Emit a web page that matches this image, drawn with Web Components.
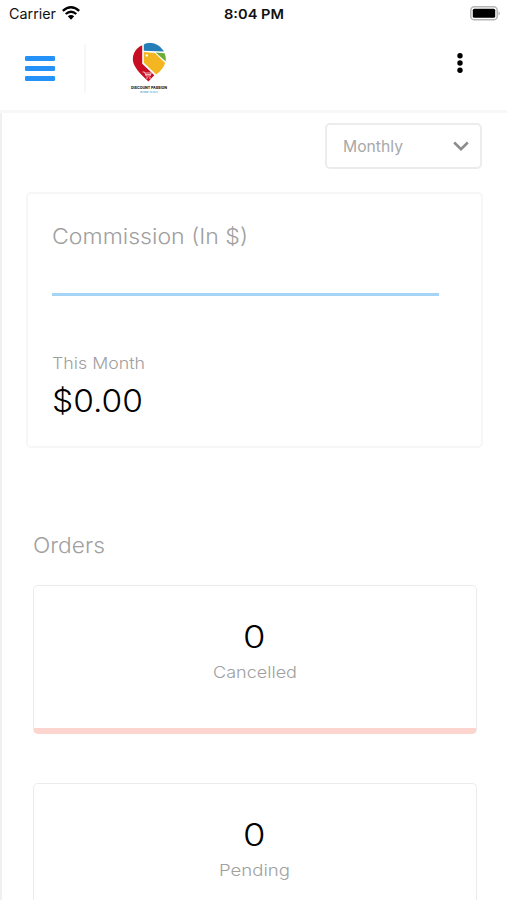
<!DOCTYPE html>
<html lang="en"><head><meta charset="utf-8"><title>Dashboard</title>
<style>
html,body{margin:0;background:#fff}
body{width:507px;height:900px;overflow:hidden;font-family:Inter,"Open Sans",sans-serif}
</style></head><body>
<mobile-screen>
<status-bar slot="status"></status-bar>
<app-header slot="header"></app-header>
<period-select>Monthly</period-select>
<commission-card></commission-card>
<order-list></order-list>
</mobile-screen>
<script>
function define(name, html, init){
  customElements.define(name, class extends HTMLElement{
    constructor(){super();this.attachShadow({mode:'open'}).innerHTML=html}
    connectedCallback(){if(init)init.call(this)}
  });
}
define('wide-text',`<style>:host{display:block;white-space:nowrap}span{display:inline-block;transform-origin:0 50%}</style><span><slot></slot></span>`,function(){
  const w=+this.getAttribute('measure'),s=this.shadowRoot.querySelector('span');
  this.style.width=w+'px';
  s.style.transform='scaleX('+w/s.getBoundingClientRect().width+')';
});
define('mobile-screen',`<style>:host{display:flex;flex-direction:column;height:900px;overflow:hidden;background:#fff}
main{flex:1;box-sizing:border-box;border-left:2px solid #f0f0f0;display:flex;flex-direction:column;min-height:0;overflow:hidden}</style>
<slot name="status"></slot><slot name="header"></slot><main><slot></slot></main>`);
define('status-bar',`<style>:host{display:grid;grid-template-columns:1fr 60px 1fr;height:27px;align-items:center;box-sizing:border-box;padding:0 6px 0 9px;color:#111;font-size:14px;line-height:18px}
.l{display:flex;gap:6px;align-items:center}.c{font-weight:600;font-size:13.5px;margin-left:-1px}.r{display:flex;justify-content:flex-end}svg{display:block}.l svg{margin-top:-2px}</style>
<div class="l"><wide-text measure="47">Carrier</wide-text><svg width="18" height="14" viewBox="0 0 18 14"><g fill="none" stroke="#000" stroke-width="2.3"><path d="M.8 4.8Q9-2.2 17.2 4.8"/><path d="M3.7 8Q9 3.4 14.3 8"/></g><path fill="#000" d="M5.8 10.2Q9 7.7 12.2 10.2L9 13.7Z"/></svg></div>
<div class="c"><wide-text measure="60">8:04 PM</wide-text></div>
<div class="r"><svg width="31" height="15" viewBox="0 0 31 15"><rect x=".8" y=".8" width="26.4" height="13" rx="3.6" fill="#fff" stroke="#b5b5b5" stroke-width="1.5"/><rect x="2.8" y="2.8" width="22.4" height="9" rx="1.5" fill="#000"/><path d="M28.6 5.2Q31 7.3 28.6 9.4Z" fill="#aaa"/></svg></div>`);
define('app-header',`<style>:host{display:flex;align-items:center;height:86px;flex:none;box-sizing:border-box;border-bottom:3px solid #f7f7f7;padding:0 44px 0 25px}
.menu{display:grid;gap:5px;width:30px}.menu i{height:5px;border-radius:1.3px;background:#2492f8}
.rule{width:2px;height:49px;background:#f7f7f7;margin-left:29px}.dots{margin-left:auto;display:block;margin-top:-11px}
brand-logo{margin-left:44px}</style>
<div class="menu"><i></i><i></i><i></i></div><div class="rule"></div><brand-logo></brand-logo><svg class="dots" width="6" height="22" viewBox="0 0 6 22"><circle cx="3" cy="3.7" r="2.7"/><circle cx="3" cy="11" r="2.7"/><circle cx="3" cy="18.3" r="2.7"/></svg>`);
define('brand-logo',`<style>:host{display:block}svg{display:block;overflow:visible}</style>
<svg width="40" height="56" viewBox="0 0 40 56">
<path fill="#c90d22" d="M12.2 4.3C5.1 7.3 1.3 14.7 3.5 22.3C5.7 28.2 12 35 18.5 40.5L24.3 34.2L12.2 22.8Z"/>
<path fill="#247fb9" d="M13.8 3.4C19 .9 27.5 1.8 32 8Q33.6 9.6 34 10.6L13.8 9.7Z"/>
<path fill="#6cac35" d="M25.6 11.4L34.6 12.2Q36.4 16.5 35.8 20.5Z"/>
<path fill="#f4b620" d="M13.8 11L24.8 12L35.2 22Q33.2 28.3 26.2 33.5L13.8 21.8Z"/>
<circle cx="16.8" cy="14.4" r="1.2" fill="#fff"/>
<g fill="none" stroke="#fff" stroke-width=".7"><path d="M12.5 31h2l1.6 4h4l1.1-3h-6M15.6 33.5h4.8"/></g><circle cx="17" cy="37" r=".7" fill="#fff"/><circle cx="20" cy="37" r=".7" fill="#fff"/>
<text x="1" y="48" textLength="36" lengthAdjust="spacingAndGlyphs" font-family="Inter" font-weight="800" font-size="4" fill="#222">DISCOUNT PASSION</text>
<text x="10" y="52.2" textLength="18" lengthAdjust="spacingAndGlyphs" font-family="Inter" font-weight="600" font-size="2.6" fill="#55a9ce">WHERE TO BUY</text></svg>`);
define('period-select',`<style>:host{display:flex;align-self:flex-end;align-items:center;justify-content:space-between;box-sizing:border-box;width:157px;height:46px;flex:none;margin:10px 25px 0 0;padding:0 11px 0 16px;border:2px solid #ececec;border-radius:5px;color:#a8a8a8;font-size:15.5px}</style>
<wide-text measure="60"><slot></slot></wide-text><svg width="16" height="10" viewBox="0 0 16 10"><path d="M1.2 1.5L8 8.2L14.8 1.5" fill="none" stroke="#8b8b8b" stroke-width="2.5"/></svg>`);
define('commission-card',`<style>:host{display:flex;flex-direction:column;box-sizing:border-box;width:457px;height:256px;flex:none;margin:23px 0 0 24px;border:2px solid #f6f6f6;border-radius:5px;padding:27px 24px 0;color:#a0a0a0}
.title{font-size:21.5px;line-height:30px;font-weight:350}.line{width:387px;height:3px;flex:none;background:#a6d4f6;margin-top:42px}
.sub{font-size:16.5px;line-height:22px;font-weight:350;margin-top:56px}.amount{font-size:30.5px;line-height:40px;font-weight:350;color:#000;margin-top:7px}</style>
<wide-text class="title" measure="196">Commission (In $)</wide-text><div class="line"></div><wide-text class="sub" measure="93">This Month</wide-text><wide-text class="amount" measure="91">$0.00</wide-text>`);
define('order-list',`<style>:host{display:flex;flex-direction:column;flex:none;padding:82px 0 0 31px;color:#a0a0a0}h2{margin:0 0 25px;font-size:21.5px;line-height:30px;font-weight:350}order-card{margin-bottom:49px}</style>
<h2><wide-text measure="72">Orders</wide-text></h2><order-card measure="84">Cancelled</order-card><order-card measure="71">Pending</order-card>`);
customElements.define('order-card',class extends HTMLElement{
  constructor(){super();this.attachShadow({mode:'open'})}
  connectedCallback(){this.shadowRoot.innerHTML=`<style>:host{display:flex;flex-direction:column;align-items:center;box-sizing:border-box;width:444px;height:149px;border:1.5px solid #ececec;border-bottom:6px solid #fbd5ce;border-radius:5px;padding-top:31px;color:#a0a0a0}
.n{font-size:30.5px;line-height:40px;font-weight:350;color:#000;margin-left:-1px}.t{font-size:16.5px;line-height:22px;font-weight:350;margin:4px 0 0 -1px}</style>
<wide-text class="n" measure="22.5">0</wide-text><wide-text class="t" measure="${this.getAttribute('measure')}"><slot></slot></wide-text>`}
});
</script></body></html>
